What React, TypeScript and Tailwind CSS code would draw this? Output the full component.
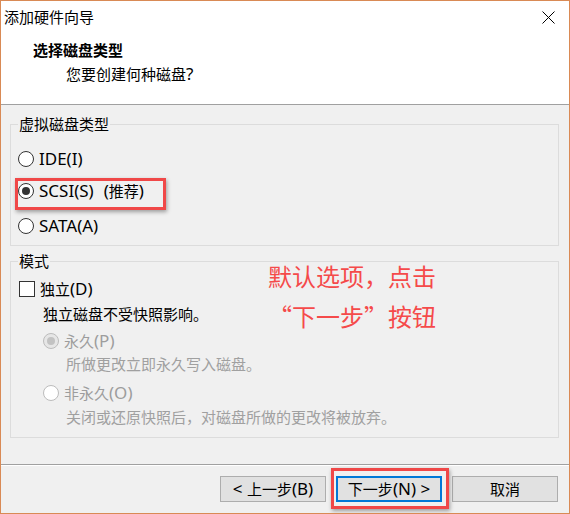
import React from "react";

const FONT = "font-['Microsoft_YaHei','Noto_Sans_CJK_SC',sans-serif]";

function L({ children }: { children: React.ReactNode }) {
  return <span className="font-['Noto_Sans','Noto_Sans_CJK_SC',sans-serif] text-[17px]">{children}</span>;
}

function Radio({ checked, disabled }: { checked?: boolean; disabled?: boolean }) {
  const ring = disabled
    ? checked
      ? "border-[#bcbcbc] bg-[#e6e6e6]"
      : "border-[#bcbcbc] bg-white"
    : "border-[#333333] bg-white";
  return (
    <span className={`w-[16px] h-[16px] rounded-full border ${ring} flex items-center justify-center shrink-0`}>
      {checked && (
        <span className={`w-[8px] h-[8px] rounded-full ${disabled ? "bg-[#c2c2c2]" : "bg-[#333333]"}`} />
      )}
    </span>
  );
}

export default function App() {
  return (
    <div
      className={`${FONT} relative w-[570px] h-[514px] border border-[#d98a55] bg-[#f0f0f0] flex flex-col text-[15px] text-black overflow-hidden`}
    >
      {/* header */}
      <div className="bg-white h-[104px] border-b border-[#a0a0a0] flex flex-col shrink-0">
        <div className="flex items-center justify-between mt-[6px] h-[20px] pl-[3px] pr-[14px]">
          <span className="leading-[20px]">添加硬件向导</span>
          <svg width="13" height="13" viewBox="0 0 13 13">
            <path d="M0.5 0.5 L12.5 12.5 M12.5 0.5 L0.5 12.5" stroke="#000" strokeWidth="1" />
          </svg>
        </div>
        <div className="mt-[13px] pl-[32px] leading-[20px] font-bold">选择磁盘类型</div>
        <div className="mt-[4px] pl-[65px] leading-[20px]">
          您要创建何种磁盘<L>?</L>
        </div>
      </div>

      {/* body */}
      <div className="pl-[9px] pr-[10px] flex flex-col">
        <fieldset className="mt-[9px] border border-[#dcdcdc] px-[7px] pb-[9px] flex flex-col">
          <legend className="px-[1px] leading-[20px]">虚拟磁盘类型</legend>
          <div className="mt-[15px] h-[20px] flex items-center gap-[5px]">
            <Radio />
            <L>IDE(I)</L>
          </div>
          <div className="mt-[12px] h-[20px] flex items-center gap-[5px]">
            <Radio checked />
            <L>SCSI(S)</L>
            <span className="ml-[5px]">
              <L>(</L>推荐<L>)</L>
            </span>
          </div>
          <div className="mt-[15px] h-[20px] flex items-center gap-[5px]">
            <Radio />
            <L>SATA(A)</L>
          </div>
        </fieldset>

        <fieldset className="mt-[5px] border border-[#dcdcdc] px-[7px] pb-[10px] flex flex-col">
          <legend className="px-[1px] leading-[20px]">模式</legend>
          <div className="mt-[8px] h-[20px] flex items-center gap-[5px]">
            <span className="ml-[1px] w-[16px] h-[16px] border border-[#333333] bg-white shrink-0" />
            <span>
              独立<L>(D)</L>
            </span>
          </div>
          <div className="mt-[5px] h-[20px] leading-[20px] pl-[25px]">独立磁盘不受快照影响。</div>
          <div className="mt-[7px] h-[20px] flex items-center gap-[5px] pl-[25px] text-[#9d9d9d]">
            <Radio checked disabled />
            <span>
              永久<L>(P)</L>
            </span>
          </div>
          <div className="mt-[3px] h-[20px] leading-[20px] pl-[48px] text-[#a0a0a0]">所做更改立即永久写入磁盘。</div>
          <div className="mt-[9px] h-[20px] flex items-center gap-[5px] pl-[25px] text-[#9d9d9d]">
            <Radio disabled />
            <span>
              非永久<L>(O)</L>
            </span>
          </div>
          <div className="mt-[4px] h-[20px] leading-[20px] pl-[48px] text-[#a0a0a0]">
            关闭或还原快照后，对磁盘所做的更改将被放弃。
          </div>
        </fieldset>
      </div>

      {/* separator */}
      <div className="mt-[26px] border-t border-[#a0a0a0] border-b border-b-white" />

      {/* buttons */}
      <div className="mt-[10px] flex justify-end gap-[10px] pr-[11px]">
        <button className="w-[106px] h-[26px] bg-[#e1e1e1] border border-[#adadad] leading-[20px] flex items-center justify-center">
          <span>
            <L>&lt; </L>上一步<L>(B)</L>
          </span>
        </button>
        <div className="relative">
          <button className="w-[106px] h-[26px] bg-[#e1e1e1] border-2 border-[#0078d7] leading-[20px] flex items-center justify-center">
            <span>
              下一步<L>(N) &gt;</L>
            </span>
          </button>
          <div className="absolute left-[-5px] right-[-7px] top-[-8px] bottom-[-7px] border-[3px] border-[#f04848] shadow-[1px_2px_4px_rgba(0,0,0,0.35)] pointer-events-none" />
        </div>
        <button className="w-[106px] h-[26px] bg-[#e1e1e1] border border-[#adadad] leading-[20px] flex items-center justify-center">
          取消
        </button>
      </div>

      {/* SCSI highlight */}
      <div className="absolute left-[14px] top-[177px] w-[151px] h-[32px] border-[3px] border-[#f04848] shadow-[1px_2px_4px_rgba(0,0,0,0.35)] pointer-events-none" />

      {/* annotation */}
      <div className="absolute left-[267px] top-[260px] text-[24px] leading-[30px] text-[#f54a4a] pointer-events-none">
        <div>默认选项，点击</div>
        <div className="mt-[10px]">“下一步”按钮</div>
      </div>
    </div>
  );
}
